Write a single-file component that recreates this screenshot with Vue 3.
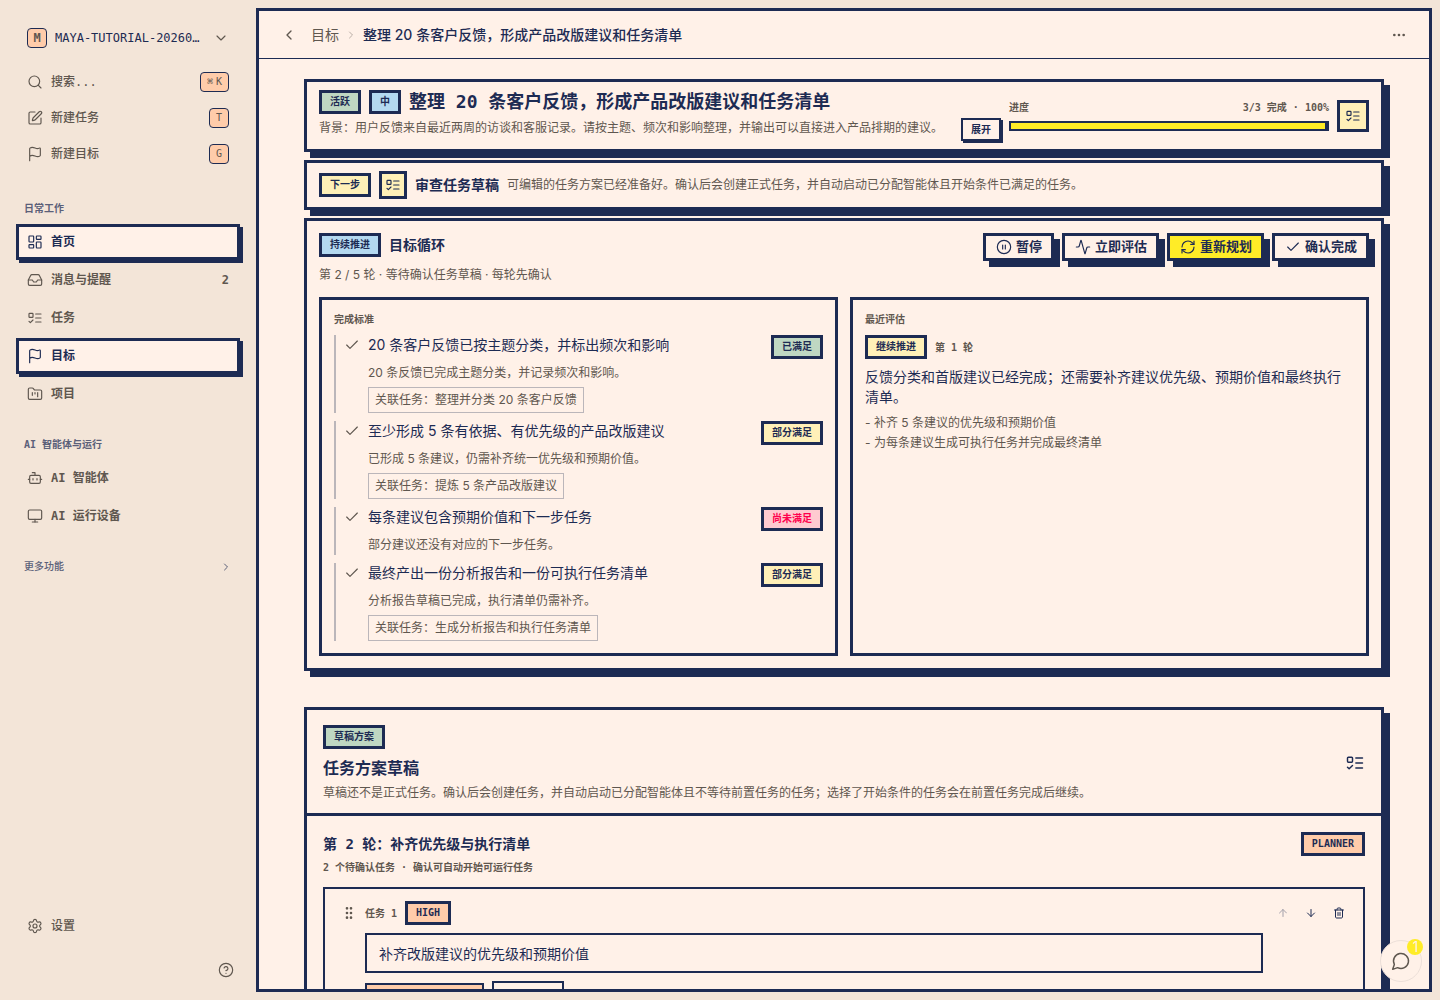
<template>
  <div class="app">
    <aside class="sidebar">
      <button class="workspace" type="button">
        <span class="workspace-logo">M</span>
        <span class="workspace-name">MAYA-TUTORIAL-20260701</span>
        <Icon name="chevronDown" />
      </button>

      <button v-for="item in quickActions" :key="item.label" class="nav-item" type="button">
        <Icon :name="item.icon" />
        <span class="nav-label">{{ item.label }}</span>
        <kbd>
          <span v-for="key in item.keys" :key="key">{{ key }}</span>
        </kbd>
      </button>

      <nav class="nav">
        <div v-for="group in navGroups" :key="group.title" class="nav-group">
          <h2 class="nav-title">{{ group.title }}</h2>
          <a
            v-for="item in group.items"
            :key="item.label"
            href="#"
            class="nav-item"
            :class="{ active: item.active }"
          >
            <Icon :name="item.icon" />
            <span class="nav-label">{{ item.label }}</span>
            <span v-if="item.count">{{ item.count }}</span>
          </a>
        </div>
      </nav>

      <button class="nav-more" type="button">
        更多功能
        <Icon name="chevronRight" :size="12" :stroke="2" />
      </button>

      <div class="sidebar-footer">
        <a href="#" class="nav-item">
          <Icon name="settings" />
          <span class="nav-label">设置</span>
        </a>
        <button class="help" type="button" aria-label="帮助">
          <Icon name="help" />
        </button>
      </div>
    </aside>

    <main class="main">
      <header class="topbar">
        <button class="icon-btn" type="button" aria-label="返回">
          <Icon name="chevronLeft" :stroke="2" />
        </button>
        <a href="#" class="crumb">目标</a>
        <Icon name="chevronRight" :size="12" :stroke="2" class="crumb-sep" />
        <span class="crumb-current">{{ goal.title }}</span>
        <button class="icon-btn topbar-more" type="button" aria-label="更多">
          <Icon name="ellipsis" :stroke="2" />
        </button>
      </header>

      <div class="scroll">
        <div class="content">
          <section class="card summary">
            <div class="summary-text">
              <div class="row">
                <span class="badge green">活跃</span>
                <span class="badge blue">中</span>
                <h1>{{ goal.title }}</h1>
              </div>
              <div class="summary-desc">
                <p class="muted">{{ goal.description }}</p>
                <button class="expand" type="button">展开</button>
              </div>
            </div>
            <div class="progress">
              <div class="progress-head">
                <span>进度</span>
                <span>3/3 完成 · {{ goal.progress }}%</span>
              </div>
              <div class="progress-track">
                <div class="progress-fill" :style="{ width: goal.progress + '%' }"></div>
              </div>
            </div>
            <button class="square-btn" type="button" aria-label="任务列表">
              <Icon name="listTodo" />
            </button>
          </section>

          <section class="card next-step row">
            <span class="badge yellow">下一步</span>
            <span class="square-btn small">
              <Icon name="listTodo" />
            </span>
            <h2>审查任务草稿</h2>
            <p class="muted">可编辑的任务方案已经准备好。确认后会创建正式任务，并自动启动已分配智能体且开始条件已满足的任务。</p>
          </section>

          <section class="card loop">
            <div class="loop-head">
              <div>
                <div class="row">
                  <span class="badge blue">持续推进</span>
                  <h2>目标循环</h2>
                </div>
                <p class="muted loop-sub">第 2 / 5 轮 · 等待确认任务草稿 · 每轮先确认</p>
              </div>
              <div class="row">
                <button
                  v-for="action in loopActions"
                  :key="action.label"
                  type="button"
                  class="action-btn"
                  :class="{ primary: action.primary }"
                >
                  <Icon :name="action.icon" />
                  {{ action.label }}
                </button>
              </div>
            </div>

            <div class="panels">
              <div class="panel">
                <h3 class="caption">完成标准</h3>
                <ul class="criteria">
                  <li v-for="item in criteria" :key="item.title" class="criterion">
                    <div class="criterion-head">
                      <Icon name="check" class="criterion-check" />
                      <span class="criterion-title">{{ item.title }}</span>
                      <span class="badge" :class="item.color">{{ item.status }}</span>
                    </div>
                    <p class="muted criterion-desc">{{ item.desc }}</p>
                    <a v-if="item.task" href="#" class="related">关联任务：{{ item.task }}</a>
                  </li>
                </ul>
              </div>
              <div class="panel">
                <h3 class="caption">最近评估</h3>
                <div class="row">
                  <span class="badge yellow">继续推进</span>
                  <span class="caption">第 1 轮</span>
                </div>
                <p class="review">反馈分类和首版建议已经完成；还需要补齐建议优先级、预期价值和最终执行清单。</p>
                <ul class="review-list muted">
                  <li>- 补齐 5 条建议的优先级和预期价值</li>
                  <li>- 为每条建议生成可执行任务并完成最终清单</li>
                </ul>
              </div>
            </div>
          </section>

          <section class="card draft">
            <div class="draft-head">
              <div class="draft-intro">
                <span class="badge green">草稿方案</span>
                <h2>任务方案草稿</h2>
                <p class="muted">草稿还不是正式任务。确认后会创建任务，并自动启动已分配智能体且不等待前置任务的任务；选择了开始条件的任务会在前置任务完成后继续。</p>
              </div>
              <Icon name="listTodo" :size="20" />
            </div>
            <div class="draft-body">
              <div class="round-head">
                <div>
                  <h3>第 2 轮：补齐优先级与执行清单</h3>
                  <p class="caption">2 个待确认任务 · 确认可自动开始可运行任务</p>
                </div>
                <span class="badge peach">PLANNER</span>
              </div>

              <article class="task">
                <button class="tiny-btn muted" type="button" aria-label="拖动排序">
                  <Icon name="grip" :stroke="2" />
                </button>
                <div class="task-body">
                  <div class="row">
                    <span class="caption">任务 1</span>
                    <span class="badge peach">HIGH</span>
                  </div>
                  <input v-model="taskTitle" class="task-input" type="text" aria-label="任务标题" />
                  <div class="task-options">
                    <button class="option-btn assignee" type="button" aria-label="负责人"></button>
                    <button class="option-btn" type="button" aria-label="开始条件"></button>
                  </div>
                </div>
                <div class="task-actions">
                  <button class="tiny-btn" type="button" aria-label="上移" disabled>
                    <Icon name="arrowUp" :size="12" :stroke="2" />
                  </button>
                  <button class="tiny-btn" type="button" aria-label="下移">
                    <Icon name="arrowDown" :size="12" :stroke="2" />
                  </button>
                  <button class="tiny-btn" type="button" aria-label="删除">
                    <Icon name="trash" :size="12" :stroke="2" />
                  </button>
                </div>
              </article>
            </div>
          </section>
        </div>
      </div>
    </main>

    <button class="chat" type="button" aria-label="聊天">
      <Icon name="message" :size="20" />
      <span class="chat-count">1</span>
    </button>
  </div>
</template>

<script setup>
import { h, ref } from 'vue'

const icons = {
  chevronDown: '<path d="m6 9 6 6 6-6"/>',
  chevronRight: '<path d="m9 18 6-6-6-6"/>',
  chevronLeft: '<path d="m15 18-6-6 6-6"/>',
  ellipsis: '<circle cx="12" cy="12" r="1"/><circle cx="19" cy="12" r="1"/><circle cx="5" cy="12" r="1"/>',
  search: '<circle cx="11" cy="11" r="8"/><path d="m21 21-4.3-4.3"/>',
  edit: '<path d="M12 3H5a2 2 0 0 0-2 2v14a2 2 0 0 0 2 2h14a2 2 0 0 0 2-2v-7"/><path d="M18.375 2.625a1 1 0 0 1 3 3l-9.013 9.014a2 2 0 0 1-.853.505l-2.873.84a.5.5 0 0 1-.62-.62l.84-2.873a2 2 0 0 1 .506-.852z"/>',
  flag: '<path d="M4 22V4a1 1 0 0 1 .4-.8A6 6 0 0 1 8 2c3 0 5 2 7.333 2q2 0 3.067-.8A1 1 0 0 1 20 4v10a1 1 0 0 1-.4.8A6 6 0 0 1 16 16c-3 0-5-2-8-2a6 6 0 0 0-4 1.528"/>',
  dashboard: '<rect width="7" height="9" x="3" y="3" rx="1"/><rect width="7" height="5" x="14" y="3" rx="1"/><rect width="7" height="9" x="14" y="12" rx="1"/><rect width="7" height="5" x="3" y="16" rx="1"/>',
  inbox: '<path d="M22 12h-6l-2 3h-4l-2-3H2"/><path d="M5.45 5.11 2 12v6a2 2 0 0 0 2 2h16a2 2 0 0 0 2-2v-6l-3.45-6.89A2 2 0 0 0 16.76 4H7.24a2 2 0 0 0-1.79 1.11z"/>',
  listTodo: '<rect x="3" y="5" width="6" height="6" rx="1"/><path d="m3 17 2 2 4-4"/><path d="M13 6h8"/><path d="M13 12h8"/><path d="M13 18h8"/>',
  folder: '<path d="M4 20h16a2 2 0 0 0 2-2V8a2 2 0 0 0-2-2h-7.93a2 2 0 0 1-1.66-.9l-.82-1.2A2 2 0 0 0 7.93 3H4a2 2 0 0 0-2 2v13c0 1.1.9 2 2 2Z"/><path d="M8 10v4"/><path d="M12 10v2"/><path d="M16 10v6"/>',
  bot: '<path d="M12 8V4H8"/><rect width="16" height="12" x="4" y="8" rx="2"/><path d="M2 14h2"/><path d="M20 14h2"/><path d="M15 13v2"/><path d="M9 13v2"/>',
  monitor: '<rect width="20" height="14" x="2" y="3" rx="2"/><path d="M8 21h8"/><path d="M12 17v4"/>',
  settings: '<path d="M9.671 4.136a2.34 2.34 0 0 1 4.659 0 2.34 2.34 0 0 0 3.319 1.915 2.34 2.34 0 0 1 2.33 4.033 2.34 2.34 0 0 0 0 3.831 2.34 2.34 0 0 1-2.33 4.033 2.34 2.34 0 0 0-3.319 1.915 2.34 2.34 0 0 1-4.659 0 2.34 2.34 0 0 0-3.32-1.915 2.34 2.34 0 0 1-2.33-4.033 2.34 2.34 0 0 0 0-3.831A2.34 2.34 0 0 1 6.35 6.051a2.34 2.34 0 0 0 3.319-1.915"/><circle cx="12" cy="12" r="3"/>',
  help: '<circle cx="12" cy="12" r="10"/><path d="M9.09 9a3 3 0 0 1 5.83 1c0 2-3 3-3 3"/><path d="M12 17h.01"/>',
  pause: '<circle cx="12" cy="12" r="10"/><path d="M10 15V9"/><path d="M14 15V9"/>',
  activity: '<path d="M22 12h-2.48a2 2 0 0 0-1.93 1.46l-2.35 8.36a.25.25 0 0 1-.48 0L9.24 2.18a.25.25 0 0 0-.48 0l-2.35 8.36A2 2 0 0 1 4.49 12H2"/>',
  refresh: '<path d="M3 12a9 9 0 0 1 9-9 9.75 9.75 0 0 1 6.74 2.74L21 8"/><path d="M21 3v5h-5"/><path d="M21 12a9 9 0 0 1-9 9 9.75 9.75 0 0 1-6.74-2.74L3 16"/><path d="M8 16H3v5"/>',
  check: '<path d="M20 6 9 17l-5-5"/>',
  grip: '<circle cx="9" cy="12" r="1"/><circle cx="9" cy="5" r="1"/><circle cx="9" cy="19" r="1"/><circle cx="15" cy="12" r="1"/><circle cx="15" cy="5" r="1"/><circle cx="15" cy="19" r="1"/>',
  arrowUp: '<path d="m5 12 7-7 7 7"/><path d="M12 19V5"/>',
  arrowDown: '<path d="M12 5v14"/><path d="m19 12-7 7-7-7"/>',
  trash: '<path d="M3 6h18"/><path d="M19 6v14c0 1-1 2-2 2H7c-1 0-2-1-2-2V6"/><path d="M8 6V4c0-1 1-2 2-2h4c1 0 2 1 2 2v2"/><path d="M10 11v6"/><path d="M14 11v6"/>',
  message: '<path d="M7.9 20A9 9 0 1 0 4 16.1L2 22Z"/>'
}

const Icon = ({ name, size = 16, stroke = 1.75 }) =>
  h('svg', {
    width: size,
    height: size,
    viewBox: '0 0 24 24',
    fill: 'none',
    stroke: 'currentColor',
    'stroke-width': stroke,
    'stroke-linecap': 'round',
    'stroke-linejoin': 'round',
    'aria-hidden': 'true',
    innerHTML: icons[name]
  })
Icon.props = ['name', 'size', 'stroke']

const quickActions = [
  { label: '搜索...', icon: 'search', keys: ['⌘', 'K'] },
  { label: '新建任务', icon: 'edit', keys: ['T'] },
  { label: '新建目标', icon: 'flag', keys: ['G'] }
]

const navGroups = [
  {
    title: '日常工作',
    items: [
      { label: '首页', icon: 'dashboard', active: true },
      { label: '消息与提醒', icon: 'inbox', count: 2 },
      { label: '任务', icon: 'listTodo' },
      { label: '目标', icon: 'flag', active: true },
      { label: '项目', icon: 'folder' }
    ]
  },
  {
    title: 'AI 智能体与运行',
    items: [
      { label: 'AI 智能体', icon: 'bot' },
      { label: 'AI 运行设备', icon: 'monitor' }
    ]
  }
]

const goal = {
  title: '整理 20 条客户反馈，形成产品改版建议和任务清单',
  description: '背景：用户反馈来自最近两周的访谈和客服记录。请按主题、频次和影响整理，并输出可以直接进入产品排期的建议。',
  progress: 100
}

const loopActions = [
  { label: '暂停', icon: 'pause' },
  { label: '立即评估', icon: 'activity' },
  { label: '重新规划', icon: 'refresh', primary: true },
  { label: '确认完成', icon: 'check' }
]

const criteria = [
  {
    title: '20 条客户反馈已按主题分类，并标出频次和影响',
    desc: '20 条反馈已完成主题分类，并记录频次和影响。',
    task: '整理并分类 20 条客户反馈',
    status: '已满足',
    color: 'green'
  },
  {
    title: '至少形成 5 条有依据、有优先级的产品改版建议',
    desc: '已形成 5 条建议，仍需补齐统一优先级和预期价值。',
    task: '提炼 5 条产品改版建议',
    status: '部分满足',
    color: 'yellow'
  },
  {
    title: '每条建议包含预期价值和下一步任务',
    desc: '部分建议还没有对应的下一步任务。',
    status: '尚未满足',
    color: 'red'
  },
  {
    title: '最终产出一份分析报告和一份可执行任务清单',
    desc: '分析报告草稿已完成，执行清单仍需补齐。',
    task: '生成分析报告和执行任务清单',
    status: '部分满足',
    color: 'yellow'
  }
]

const taskTitle = ref('补齐改版建议的优先级和预期价值')
</script>

<style>
body {
  margin: 0;
  background: #f3e5d8;
}
</style>

<style scoped>
.app {
  --ink: #1d2b53;
  --paper: #fff1e8;
  --muted: #5f574f;
  --peach: #ffccaa;
  --yellow: #ffec27;
  --sans: Inter, "Noto Sans CJK SC", sans-serif;
  --mono: "DejaVu Sans Mono", "Noto Sans CJK SC", monospace;
  display: flex;
  height: 100vh;
  overflow: hidden;
  color: var(--ink);
  font-family: var(--sans);
  font-size: 14px;
  line-height: 20px;
}

.app * {
  box-sizing: border-box;
}

h1,
h2,
h3,
p,
ul {
  margin: 0;
  padding: 0;
  list-style: none;
}

button,
input {
  margin: 0;
  padding: 0;
  border: none;
  background: none;
  color: inherit;
  font: inherit;
}

button {
  cursor: pointer;
}

a {
  color: inherit;
  text-decoration: none;
}

svg {
  display: block;
  flex: none;
}

.row {
  display: flex;
  align-items: center;
  gap: 8px;
}

.muted {
  color: var(--muted);
  font-size: 12px;
}

.caption {
  color: var(--muted);
  font-family: var(--mono);
  font-size: 10px;
  font-weight: 600;
  line-height: 15px;
}

/* sidebar */
.sidebar {
  display: flex;
  flex-direction: column;
  flex: none;
  width: 256px;
  padding: 20px 16px 16px;
  color: var(--muted);
  font-family: var(--mono);
  font-size: 12px;
  font-weight: 500;
}

.workspace {
  display: flex;
  align-items: center;
  gap: 8px;
  height: 36px;
  margin-bottom: 8px;
  padding: 0 11px;
  text-align: left;
}

.workspace-logo {
  display: flex;
  align-items: center;
  justify-content: center;
  flex: none;
  width: 20px;
  height: 20px;
  border: 1px solid var(--ink);
  border-radius: 4px;
  background: var(--peach);
  font-weight: 700;
}

.workspace-name {
  flex: 1;
  margin-right: 4px;
  overflow: hidden;
  color: var(--ink);
  text-overflow: ellipsis;
  white-space: nowrap;
}

.nav-item {
  display: flex;
  align-items: center;
  gap: 8px;
  width: 100%;
  height: 36px;
  padding: 0 8px;
  border: 3px solid transparent;
  text-align: left;
}

.nav-item.active {
  border-color: var(--ink);
  background: var(--paper);
  box-shadow: 3px 3px 0 var(--ink);
  color: var(--ink);
}

.nav-label {
  flex: 1;
}

kbd {
  display: flex;
  justify-content: center;
  gap: 3px;
  min-width: 20px;
  height: 20px;
  padding: 0 6px;
  border: 1px solid var(--ink);
  border-radius: 4px;
  background: var(--peach);
  font-family: var(--mono);
  font-size: 10px;
  font-weight: 400;
  line-height: 18px;
}

.nav {
  padding-top: 4px;
}

.nav-group {
  display: flex;
  flex-direction: column;
  gap: 2px;
  padding-top: 24px;
  font-weight: 600;
}

.nav-title {
  margin-bottom: 4px;
  padding: 0 8px;
  color: #5b6079;
  font-size: 10px;
  font-weight: 600;
  line-height: 18px;
}

.nav-more {
  display: flex;
  align-items: center;
  justify-content: space-between;
  margin-top: 24px;
  padding: 0 8px;
  color: #5b6079;
  font-size: 10px;
  line-height: 18px;
}

.sidebar-footer {
  display: flex;
  flex-direction: column;
  align-items: flex-end;
  gap: 12px;
  margin-top: auto;
}

.help {
  padding: 6px;
}

/* main area */
.main {
  display: flex;
  flex-direction: column;
  flex: 1;
  min-width: 0;
  margin: 8px 8px 8px 0;
  border: 3px solid var(--ink);
  background: var(--paper);
}

.topbar {
  display: flex;
  align-items: center;
  flex: none;
  height: 48px;
  padding: 0 18px;
  border-bottom: 1px solid var(--ink);
}

.icon-btn {
  padding: 4px;
  color: var(--muted);
}

.crumb {
  margin-left: 10px;
  color: var(--muted);
}

.crumb-sep {
  margin: 0 6px;
  color: #b9aea6;
}

.crumb-current {
  font-weight: 500;
}

.topbar-more {
  margin-left: auto;
}

.scroll {
  flex: 1;
  min-height: 0;
  overflow: hidden;
  padding: 20px 24px;
}

.content {
  display: flex;
  flex-direction: column;
  gap: 8px;
  max-width: 1080px;
  margin: 0 auto;
}

.card {
  border: 3px solid var(--ink);
  background: var(--paper);
  box-shadow: 6px 6px 0 var(--ink);
}

.card h2 {
  font-family: var(--mono);
  font-size: 14px;
  font-weight: 700;
}

.badge {
  display: inline-flex;
  align-items: center;
  flex: none;
  height: 24px;
  padding: 0 8px;
  border: 3px solid var(--ink);
  font-family: var(--mono);
  font-size: 10px;
  font-weight: 700;
  line-height: 18px;
}

.badge.green {
  background: #bfd7c2;
}

.badge.blue {
  background: #b4d9f0;
}

.badge.yellow {
  background: #fff0b8;
}

.badge.peach {
  background: var(--peach);
}

.badge.red {
  background: #ffcad0;
  color: #ff004d;
}

.square-btn {
  display: flex;
  align-items: center;
  justify-content: center;
  flex: none;
  width: 32px;
  height: 32px;
  border: 3px solid var(--ink);
  background: #fff0b8;
}

.square-btn.small {
  width: 28px;
  height: 28px;
}

.summary {
  display: flex;
  align-items: center;
  gap: 8px;
  padding: 8px 12px;
}

.summary-text {
  flex: 1;
  min-width: 0;
}

.summary h1 {
  font-family: var(--mono);
  font-size: 18px;
  font-weight: 700;
  line-height: 24px;
}

.summary-desc {
  display: flex;
  align-items: flex-start;
  justify-content: space-between;
  gap: 8px;
  margin-top: 4px;
}

.expand {
  flex: none;
  height: 23px;
  padding: 0 8px;
  border: 2px solid var(--ink);
  box-shadow: 2px 2px 0 var(--ink);
  font-family: var(--mono);
  font-size: 10px;
  font-weight: 700;
  line-height: 19px;
}

.progress {
  width: 320px;
}

.progress-head {
  display: flex;
  justify-content: space-between;
  margin-bottom: 6px;
  color: var(--muted);
  font-family: var(--mono);
  font-size: 10px;
  font-weight: 700;
  line-height: 15px;
}

.progress-track {
  height: 10px;
  border: 2px solid var(--ink);
}

.progress-fill {
  height: 100%;
  border-right: 2px solid var(--ink);
  background: var(--yellow);
}

.next-step {
  padding: 8px 12px;
}

.loop {
  padding: 12px;
}

.loop-head {
  display: flex;
  align-items: flex-start;
  justify-content: space-between;
}

.loop-sub {
  margin-top: 8px;
}

.action-btn {
  display: flex;
  align-items: center;
  gap: 4px;
  height: 28px;
  padding: 0 9px 0 10px;
  border: 3px solid var(--ink);
  background: var(--paper);
  box-shadow: 6px 6px 0 var(--ink);
  font-family: var(--mono);
  font-size: 13px;
  font-weight: 700;
}

.action-btn.primary {
  background: var(--yellow);
}

.panels {
  display: grid;
  grid-template-columns: 1fr 1fr;
  gap: 12px;
  margin-top: 12px;
}

.panel {
  padding: 12px;
  border: 3px solid var(--ink);
}

.panel h3 {
  margin-bottom: 8px;
}

.criteria {
  display: grid;
  gap: 8px;
}

.criterion {
  padding-left: 8px;
  border-left: 2px solid #bbb6ba;
}

.criterion-head {
  display: flex;
  align-items: flex-start;
  gap: 8px;
  height: 24px;
}

.criterion-check {
  margin-top: 2px;
  color: var(--muted);
}

.criterion-title {
  flex: 1;
}

.criterion-desc {
  margin: 4px 0 0 24px;
}

.related {
  display: inline-block;
  margin: 4px 0 0 24px;
  padding: 2px 6px;
  border: 1px solid #bbb6ba;
  color: var(--muted);
  font-size: 12px;
  vertical-align: top;
}

.review {
  margin-top: 8px;
}

.review-list {
  display: grid;
  gap: 4px;
  margin-top: 8px;
  line-height: 16px;
}

.draft {
  margin-top: 28px;
}

.draft-head {
  display: flex;
  align-items: center;
  justify-content: space-between;
  padding: 12px 16px 10px;
  border-bottom: 3px solid var(--ink);
}

.draft-intro {
  padding-top: 3px;
}

.draft-head .badge {
  vertical-align: top;
}

.draft-head h2 {
  margin: 8px 0 2px;
  font-size: 16px;
  line-height: 24px;
}

.draft-body {
  padding: 16px;
}

.round-head {
  display: flex;
  align-items: flex-start;
  justify-content: space-between;
  margin-bottom: 12px;
}

.round-head h3 {
  margin-bottom: 4px;
  font-family: var(--mono);
  font-size: 14px;
  font-weight: 700;
  line-height: 24px;
}

.task {
  display: flex;
  align-items: flex-start;
  padding: 12px;
  border: 2px solid var(--ink);
}

.tiny-btn {
  display: flex;
  align-items: center;
  justify-content: center;
  width: 24px;
  height: 24px;
}

.tiny-btn:disabled {
  opacity: 0.4;
}

.task-body {
  flex: 1;
  margin: 0 8px 0 4px;
}

.task-input {
  width: 100%;
  height: 40px;
  margin-top: 8px;
  padding: 0 12px;
  border: 2px solid var(--ink);
}

.task-options {
  display: flex;
  align-items: center;
  gap: 8px;
  margin-top: 8px;
}

.option-btn {
  width: 72px;
  height: 32px;
  border: 2px solid var(--ink);
}

.option-btn.assignee {
  width: 119px;
  height: 28px;
  background: var(--peach);
}

.task-actions {
  display: flex;
  gap: 4px;
}

.chat {
  position: fixed;
  right: 18px;
  bottom: 18px;
  display: flex;
  align-items: center;
  justify-content: center;
  width: 42px;
  height: 42px;
  border: 1px solid #ecdfd8;
  border-radius: 50%;
  background: var(--paper);
  color: var(--muted);
}

.chat-count {
  position: absolute;
  top: -2px;
  right: -2px;
  width: 16px;
  height: 16px;
  border-radius: 50%;
  background: var(--yellow);
  color: var(--paper);
  font-size: 14px;
  line-height: 16px;
}
</style>
